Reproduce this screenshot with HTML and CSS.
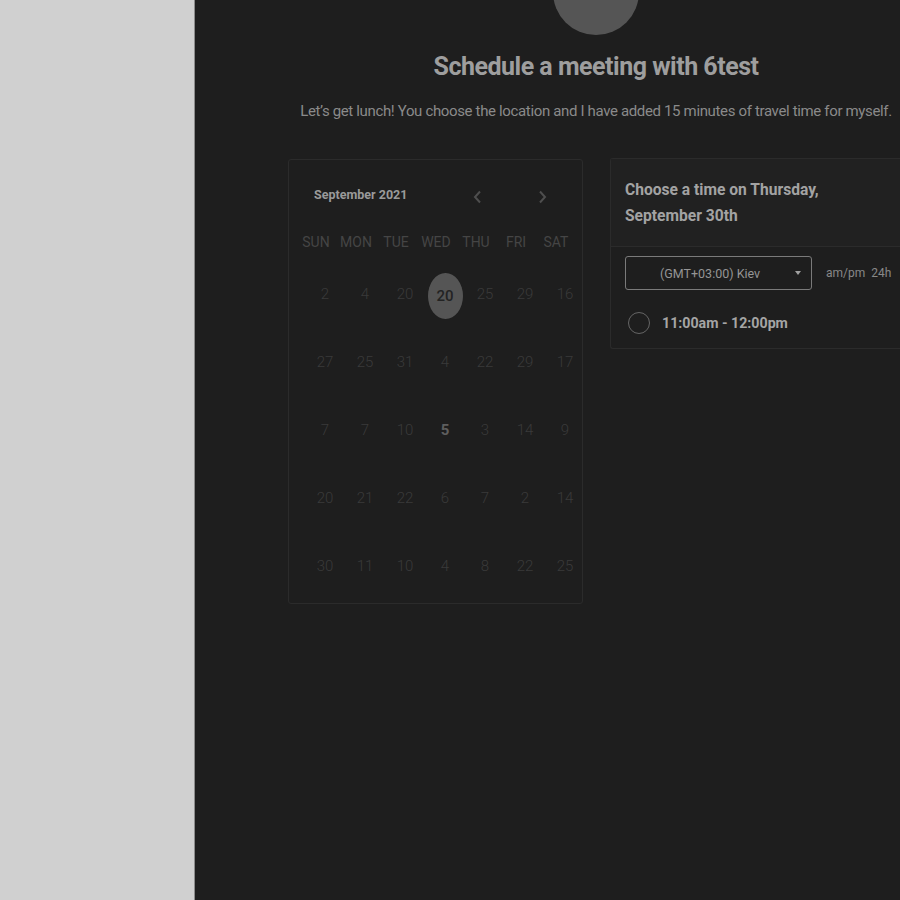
FILE: index.html
```html
<!DOCTYPE html>
<html lang="en">
<head>
<meta charset="utf-8">
<title>Schedule a meeting</title>
<link rel="stylesheet" href="styles.css">
</head>
<body>
<aside class="sidebar"></aside>
<main class="main">
  <div class="content">
    <div class="avatar"></div>
    <h1 class="title">Schedule a meeting with 6test</h1>
    <p class="subtitle">Let’s get lunch! You choose the location and I have added 15 minutes of travel time for myself.</p>
    <div class="columns">
      <section class="calendar">
        <div class="cal-head">
          <span class="month">September 2021</span>
          <div class="nav">
            <span class="nav-btn"><svg width="9" height="14" viewBox="0 0 9 14"><path d="M7 1.5 L2 7 L7 12.5" fill="none" stroke="currentColor" stroke-width="2"/></svg></span>
            <span class="nav-btn"><svg width="9" height="14" viewBox="0 0 9 14"><path d="M2 1.5 L7 7 L2 12.5" fill="none" stroke="currentColor" stroke-width="2"/></svg></span>
          </div>
        </div>
        <div class="weekdays">
          <span>SUN</span><span>MON</span><span>TUE</span><span>WED</span><span>THU</span><span>FRI</span><span>SAT</span>
        </div>
        <div class="days">
          <span class="day">2</span><span class="day">4</span><span class="day">20</span><span class="day selected"><b>20</b></span><span class="day">25</span><span class="day">29</span><span class="day">16</span>
          <span class="day">27</span><span class="day">25</span><span class="day">31</span><span class="day">4</span><span class="day">22</span><span class="day">29</span><span class="day">17</span>
          <span class="day">7</span><span class="day">7</span><span class="day">10</span><span class="day active">5</span><span class="day">3</span><span class="day">14</span><span class="day">9</span>
          <span class="day">20</span><span class="day">21</span><span class="day">22</span><span class="day">6</span><span class="day">7</span><span class="day">2</span><span class="day">14</span>
          <span class="day">30</span><span class="day">11</span><span class="day">10</span><span class="day">4</span><span class="day">8</span><span class="day">22</span><span class="day">25</span>
        </div>
      </section>
      <section class="times">
        <div class="times-head">Choose a time on Thursday,<br>September 30th</div>
        <div class="times-body">
          <div class="tz-row">
            <div class="tz-select">
              <span class="tz-label">(GMT+03:00) Kiev</span>
              <span class="caret"></span>
            </div>
            <span class="fmt">am/pm</span>
            <span class="fmt">24h</span>
          </div>
          <div class="slot">
            <span class="radio"></span>
            <span class="slot-label">11:00am - 12:00pm</span>
          </div>
        </div>
      </section>
    </div>
  </div>
</main>
</body>
</html>
```
FILE: styles.css
```css
* { box-sizing: border-box; }
html, body { margin: 0; padding: 0; }
body {
  display: flex;
  width: 900px;
  height: 900px;
  overflow: hidden;
  font-family: Roboto, "Liberation Sans", sans-serif;
  background: #1e1e1e;
}
.sidebar {
  width: 195px;
  flex-shrink: 0;
  background: #d0d0d0;
  border-right: 1px solid #8c8c8c;
}
.main {
  flex: 1;
  min-width: 0;
  background: #1e1e1e;
  padding-left: 93px;
  overflow: hidden;
}
.content {
  width: 616px;
}
.avatar {
  width: 86px;
  height: 86px;
  border-radius: 50%;
  background: #555555;
  margin: -51px auto 0;
}
.title {
  margin: 17px 0 0;
  text-align: center;
  font-size: 25px;
  line-height: 30px;
  font-weight: 700;
  color: #9e9e9e;
  letter-spacing: -0.5px;
  white-space: nowrap;
}
.subtitle {
  margin: 19px 0 0;
  text-align: center;
  font-size: 15px;
  line-height: 20px;
  color: #8a8a8a;
  white-space: nowrap;
  letter-spacing: -0.35px;
}
.columns {
  display: flex;
  align-items: flex-start;
  gap: 27px;
  margin-top: 38px;
}
.calendar {
  width: 295px;
  height: 445px;
  border: 1px solid #2b2b2b;
  border-radius: 3px;
  flex-shrink: 0;
}
.cal-head {
  display: flex;
  align-items: center;
  height: 24px;
  margin-top: 22px;
  padding-left: 25px;
}
.month {
  font-size: 12.5px;
  font-weight: 700;
  color: #9a9a9a;
}
.nav {
  margin-left: auto;
  display: flex;
  gap: 41px;
  padding-right: 28px;
  margin-top: 6px;
}
.nav-btn {
  width: 24px;
  display: flex;
  justify-content: center;
  color: #4e4e4e;
}
.weekdays {
  display: grid;
  grid-template-columns: repeat(7, 40px);
  margin-top: 26px;
  padding-left: 7px;
  height: 20px;
  line-height: 20px;
}
.weekdays span {
  text-align: center;
  font-size: 14px;
  color: #454545;
}
.days {
  display: grid;
  grid-template-columns: repeat(7, 40px);
  grid-auto-rows: 68px;
  margin-top: 8px;
  padding-left: 16px;
}
.day {
  display: flex;
  align-items: center;
  justify-content: center;
  font-size: 15px;
  font-weight: 300;
  color: #3a3a3a;
}
.day.active {
  font-weight: 700;
  color: #5e5e5e;
}
.day.selected b {
  display: flex;
  align-items: center;
  justify-content: center;
  width: 35px;
  height: 46px;
  margin-top: 3px;
  border-radius: 50%;
  background: #555555;
  color: #232323;
  font-weight: 500;
  font-size: 15px;
}
.times {
  width: 294px;
  flex-shrink: 0;
  margin-top: -1px;
  border: 1px solid #2b2b2b;
  border-right: none;
  border-radius: 3px 0 0 3px;
}
.times-head {
  background: #212121;
  border-bottom: 1px solid #2b2b2b;
  padding: 18px 14px 17px;
  font-size: 15.6px;
  line-height: 26px;
  font-weight: 700;
  color: #a3a3a3;
}
.times-body {
  padding: 9px 14px 13px;
}
.tz-row {
  display: flex;
  align-items: center;
}
.tz-select {
  width: 187px;
  height: 34px;
  flex-shrink: 0;
  border: 1px solid #7a7a7a;
  border-radius: 3px;
  display: flex;
  align-items: center;
  padding-left: 34px;
  padding-right: 10px;
}
.tz-label {
  font-size: 12.5px;
  color: #959595;
}
.caret {
  margin-left: auto;
  width: 0;
  height: 0;
  border-left: 3.5px solid transparent;
  border-right: 3.5px solid transparent;
  border-top: 4px solid #a0a0a0;
}
.fmt {
  font-size: 12px;
  color: #888888;
  margin-left: 6px;
  white-space: nowrap;
}
.fmt:first-of-type {
  margin-left: 14px;
}
.slot {
  display: flex;
  align-items: center;
  margin-top: 21px;
  height: 24px;
  padding-left: 3px;
}
.radio {
  width: 22px;
  height: 22px;
  border-radius: 50%;
  border: 1.5px solid #656565;
  flex-shrink: 0;
}
.slot-label {
  margin-left: 12px;
  font-size: 14.2px;
  font-weight: 700;
  color: #a5a5a5;
}
```
